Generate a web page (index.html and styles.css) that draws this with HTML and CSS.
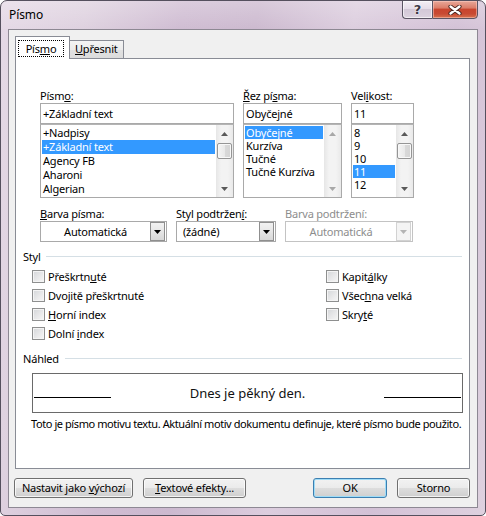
FILE: index.html
```html
<!DOCTYPE html>
<html lang="cs">
<head>
<meta charset="utf-8">
<title>Písmo</title>
<link rel="stylesheet" href="styles.css">
</head>
<body>
<div class="window">
  <div class="titlebar">
    <span class="title">Písmo</span>
    <div class="caption">
      <div class="cbtn help"><span>?</span></div>
      <div class="cbtn close">
        <svg width="14" height="10" viewBox="0 0 14 10"><path d="M2.5 1.5 L11.5 8.5 M11.5 1.5 L2.5 8.5" stroke="#4a2620" stroke-width="4.2" stroke-linecap="round"/><path d="M2.5 1.5 L11.5 8.5 M11.5 1.5 L2.5 8.5" stroke="#fff" stroke-width="2.3" stroke-linecap="round"/></svg>
      </div>
    </div>
  </div>
  <div class="client">
    <div class="tabs">
      <div class="tab active"><span class="focus">Pís<u>m</u>o</span></div>
      <div class="tab inactive"><u>U</u>přesnit</div>
    </div>
    <div class="panel">
      <div class="fontgrid">
        <div class="lbl">Písm<u>o</u>:</div>
        <div class="lbl"><u>Ř</u>ez pí<u>s</u>ma:</div>
        <div class="lbl">Vel<u>i</u>kost:</div>

        <div class="field">+Základní text</div>
        <div class="field">Obyčejné</div>
        <div class="field">11</div>

        <div class="list">
          <div class="items rows14">
            <div class="item">+Nadpisy</div>
            <div class="item sel">+Základní text</div>
            <div class="item">Agency FB</div>
            <div class="item">Aharoni</div>
            <div class="item">Algerian</div>
          </div>
          <div class="sb">
            <div class="sb-btn"><svg width="7" height="4" viewBox="0 0 7 4"><path d="M0 4 L3.5 0 L7 4Z" fill="#5a5a5a"/></svg></div>
            <div class="sb-track"><div class="thumb"></div></div>
            <div class="sb-btn"><svg width="7" height="4" viewBox="0 0 7 4"><path d="M0 0 H7 L3.5 4Z" fill="#5a5a5a"/></svg></div>
          </div>
        </div>
        <div class="list">
          <div class="items">
            <div class="item sel">Obyčejné</div>
            <div class="item">Kurzíva</div>
            <div class="item">Tučné</div>
            <div class="item">Tučné Kurzíva</div>
          </div>
          <div class="sb">
            <div class="sb-btn"><svg width="7" height="4" viewBox="0 0 7 4"><path d="M0 4 L3.5 0 L7 4Z" fill="#a8a8a8"/></svg></div>
            <div class="sb-track"></div>
            <div class="sb-btn"><svg width="7" height="4" viewBox="0 0 7 4"><path d="M0 0 H7 L3.5 4Z" fill="#a8a8a8"/></svg></div>
          </div>
        </div>
        <div class="list">
          <div class="items">
            <div class="item">8</div>
            <div class="item">9</div>
            <div class="item">10</div>
            <div class="item sel">11</div>
            <div class="item">12</div>
          </div>
          <div class="sb">
            <div class="sb-btn"><svg width="7" height="4" viewBox="0 0 7 4"><path d="M0 4 L3.5 0 L7 4Z" fill="#5a5a5a"/></svg></div>
            <div class="sb-track"><div class="thumb"></div></div>
            <div class="sb-btn"><svg width="7" height="4" viewBox="0 0 7 4"><path d="M0 0 H7 L3.5 4Z" fill="#5a5a5a"/></svg></div>
          </div>
        </div>
      </div>

      <div class="selrow">
        <div class="lbl"><u>B</u>arva písma:</div>
        <div class="lbl">Styl podtržen<u>í</u>:</div>
        <div class="lbl disabled">Barva podtržení:</div>

        <div class="combo">
          <div class="combo-text center">Automatická</div>
          <div class="combo-btn"><svg width="7" height="4" viewBox="0 0 7 4"><path d="M0 0 H7 L3.5 4Z" fill="#000"/></svg></div>
        </div>
        <div class="combo">
          <div class="combo-text">(žádné)</div>
          <div class="combo-btn"><svg width="7" height="4" viewBox="0 0 7 4"><path d="M0 0 H7 L3.5 4Z" fill="#000"/></svg></div>
        </div>
        <div class="combo off">
          <div class="combo-text center">Automatická</div>
          <div class="combo-btn"><svg width="7" height="4" viewBox="0 0 7 4"><path d="M0 0 H7 L3.5 4Z" fill="#b4b4b4"/></svg></div>
        </div>
      </div>

      <div class="group">Styl</div>
      <div class="effects">
        <div class="col">
          <div class="check"><span class="box"></span><span>Přeškrtn<u>u</u>té</span></div>
          <div class="check"><span class="box"></span><span>Dvo<u>j</u>itě přeškrtnuté</span></div>
          <div class="check"><span class="box"></span><span><u>H</u>orní index</span></div>
          <div class="check"><span class="box"></span><span>Dolní <u>i</u>ndex</span></div>
        </div>
        <div class="col">
          <div class="check"><span class="box"></span><span>Kapit<u>á</u>lky</span></div>
          <div class="check"><span class="box"></span><span>Všec<u>h</u>na velká</span></div>
          <div class="check"><span class="box"></span><span>Skry<u>t</u>é</span></div>
        </div>
      </div>

      <div class="group wide">Náhled</div>
      <div class="preview">
        <span class="pline"></span>
        <span class="ptext">Dnes je pěkný den.</span>
        <span class="pline"></span>
      </div>
      <p class="note">Toto je písmo motivu textu. Aktuální motiv dokumentu definuje, které písmo bude použito.</p>
    </div>

    <div class="buttons">
      <button class="btn w119">Nastavit jako <u>v</u>ýchozí</button>
      <button class="btn w103"><u>T</u>extové efekty...</button>
      <button class="btn w74 default">OK</button>
      <button class="btn w73">Storno</button>
    </div>
  </div>
</div>
</body>
</html>
```
FILE: styles.css
```css
* { box-sizing: border-box; }
html, body { margin: 0; padding: 0; }
body {
  width: 486px;
  height: 516px;
  overflow: hidden;
  background: #ffffff;
  font-family: "Noto Sans", "Open Sans", "DejaVu Sans", sans-serif;
  font-size: 11px;
  letter-spacing: -0.2px;
  color: #000;
}
u { text-decoration: underline; text-underline-offset: 1px; }

.window {
  width: 486px;
  height: 516px;
  border: 1px solid #55505e;
  border-radius: 7px 7px 5px 5px;
  background:
    linear-gradient(180deg, rgba(255,255,255,0.25), rgba(255,255,255,0) 30px),
    linear-gradient(100deg, #e5d9e6 0%, #ded1df 15%, #cfbcd2 32%, #ccb9cf 45%, #dccdde 62%, #d3c1d6 80%, #ded1df 100%);
  padding: 0 7px 7px 7px;
  display: flex;
  flex-direction: column;
  overflow: hidden;
}

.titlebar {
  height: 28px;
  display: flex;
  justify-content: space-between;
  align-items: flex-start;
}
.title {
  padding-left: 1px;
  line-height: 28px;
  font-size: 12px;
  letter-spacing: -0.1px;
  color: #000;
}
.caption {
  display: flex;
  margin-top: -1px;
}
.cbtn {
  height: 19px;
  border: 1px solid #5b5564;
  display: flex;
  align-items: center;
  justify-content: center;
}
.help {
  width: 30px;
  border-right: none;
  border-radius: 0 0 0 4px;
  background: linear-gradient(180deg, #f4eff5 0%, #e6dde9 45%, #d3c8d7 50%, #dcd2df 100%);
  box-shadow: inset 0 0 0 1px rgba(255,255,255,0.6);
}
.help span {
  font-family: "DejaVu Sans", sans-serif;
  font-weight: bold;
  font-size: 13px;
  line-height: 1;
  color: #3c3846;
  text-shadow: 0 0 2px #fff, 0 0 1px #fff;
}
.close {
  width: 46px;
  border-radius: 0 0 4px 0;
  background: linear-gradient(180deg, #e8a899 0%, #dc7e6a 40%, #c9452e 50%, #c84a33 75%, #d6714e 100%);
  box-shadow: inset 0 0 0 1px rgba(255,210,200,0.5);
}

.client {
  flex: 1;
  background: #f0f0f0;
  border: 1px solid #8d8893;
  padding: 6px 7px 0 6px;
  display: flex;
  flex-direction: column;
}

.tabs {
  display: flex;
  align-items: flex-end;
  height: 23px;
  margin-bottom: -1px;
}
.tab {
  width: 55px;
  border: 1px solid #898c95;
  border-bottom: none;
}
.tab.active {
  height: 23px;
  background: #fff;
  position: relative;
  z-index: 1;
  padding: 3px 0 0 2px;
}
.focus {
  display: block;
  width: 46px;
  height: 17px;
  border: 1px dotted #000;
  text-align: center;
  line-height: 15px;
}
.tab.inactive {
  height: 18px;
  margin-left: -1px;
  margin-bottom: 1px;
  padding-left: 5px;
  line-height: 16px;
  background: linear-gradient(180deg, #f4f4f4 0%, #ececec 50%, #e1e1e1 51%, #dcdcdc 100%);
}

.panel {
  height: 411px;
  background: #fff;
  border: 1px solid #898c95;
  padding: 29px 7px 0 7px;
}

.lbl {
  line-height: 15px;
  white-space: nowrap;
}
.lbl.disabled { color: #8d8d8d; }

.fontgrid {
  display: grid;
  grid-template-columns: 194px 99px 63px;
  grid-template-rows: 15px 21px 74px;
  column-gap: 9px;
  margin-left: 17px;
}
.field {
  height: 21px;
  border: 1px solid #a9a9a9;
  padding: 0 2px;
  line-height: 19px;
  white-space: nowrap;
}
.list {
  height: 74px;
  border: 1px solid #a9a9a9;
  border-top-color: #b4b4b4;
  display: flex;
}
.items {
  flex: 1;
  min-width: 0;
  padding: 1px 1px 0 1px;
  overflow: hidden;
}
.item {
  height: 13px;
  line-height: 13px;
  padding-left: 1px;
  white-space: nowrap;
  overflow: hidden;
}
.rows14 .item { height: 14px; line-height: 14px; }
.item.sel { background: #3399ff; color: #fff; }

.sb {
  width: 17px;
  flex: none;
  display: flex;
  flex-direction: column;
  background: linear-gradient(90deg, #e6e6e6 0%, #f3f3f3 30%, #f3f3f3 70%, #e9e9e9 100%);
}
.sb-btn {
  height: 17px;
  display: flex;
  align-items: center;
  justify-content: center;
}
.sb-track {
  flex: 1;
  display: flex;
  flex-direction: column;
  align-items: center;
}
.thumb {
  margin-top: 1px;
  width: 15px;
  height: 16px;
  border: 1px solid #959595;
  border-radius: 2px;
  background: linear-gradient(90deg, #f5f5f5 0%, #e9e9e9 50%, #d9d9d9 51%, #d4d4d4 100%);
  box-shadow: inset 0 0 0 1px #f8f8f8;
}

.selrow {
  display: grid;
  grid-template-columns: 127px 100px 128px;
  grid-template-rows: 15px 21px;
  column-gap: 9px;
  margin: 8px 0 0 17px;
}
.combo {
  height: 21px;
  border: 1px solid #a9a9a9;
  display: flex;
}
.combo-text {
  flex: 1;
  line-height: 19px;
  padding-left: 6px;
  white-space: nowrap;
}
.combo-text.center { text-align: center; padding-left: 0; }
.combo-btn {
  width: 15px;
  margin-right: 1px;
  border: 1px solid #8f8f8f;
  background: linear-gradient(180deg, #f2f2f2 0%, #e6e6e6 50%, #d8d8d8 100%);
  display: flex;
  align-items: center;
  justify-content: center;
}
.combo.off { border-color: #c3c3c3; color: #8d8d8d; }
.combo.off .combo-btn { border-color: #d2d2d2; background: #f4f4f4; }

.group {
  display: flex;
  align-items: center;
  height: 15px;
  margin-top: 7px;
}
.group::after {
  content: "";
  flex: 1;
  height: 1px;
  background: #d5dfe5;
  margin-left: 5px;
}
.group.wide { margin-top: 8px; }
.group.wide::after { margin-left: 6px; }

.effects {
  display: grid;
  grid-template-columns: 294px auto;
  margin: 3px 0 0 9px;
}
.check {
  display: flex;
  align-items: center;
  height: 19px;
  white-space: nowrap;
}
.box {
  width: 13px;
  height: 13px;
  margin-right: 3px;
  border: 1px solid #8e8f8f;
  background: linear-gradient(135deg, #d4d6d9 0%, #eaeaeb 60%, #f6f6f6 100%);
  box-shadow: inset 0 0 0 1px #f4f4f4;
}

.preview {
  width: 431px;
  height: 40px;
  margin: 7px 0 0 9px;
  border: 1px solid #6a6a6a;
  display: flex;
  align-items: flex-start;
  padding: 0 1px;
}
.pline {
  width: 77px;
  height: 1px;
  margin-top: 23px;
  background: #000;
}
.ptext {
  flex: 1;
  text-align: center;
  margin-top: 9px;
  line-height: 20px;
  font-size: 13px;
  letter-spacing: 0;
  color: #111;
}
.note {
  margin: 3px 0 0 8px;
  line-height: 15px;
  white-space: nowrap;
  letter-spacing: -0.42px;
}

.buttons {
  display: flex;
  margin: 9px 0 0 -1px;
  gap: 10px;
}
.btn {
  height: 20px;
  padding: 0;
  font: inherit;
  letter-spacing: inherit;
  color: #000;
  border: 1px solid #707070;
  border-radius: 3px;
  background: linear-gradient(180deg, #f2f2f2 0%, #ebebeb 48%, #dddddd 52%, #cfcfcf 100%);
  box-shadow: inset 0 0 0 1px rgba(255,255,255,0.75);
  line-height: 18px;
  text-align: center;
}
.w119 { width: 119px; }
.w103 { width: 103px; }
.w74 { width: 74px; margin-left: auto; }
.w73 { width: 73px; }
.btn.default {
  border-color: #3c7fb1;
  box-shadow: inset 0 0 0 1px #9fdcf7;
}
```
